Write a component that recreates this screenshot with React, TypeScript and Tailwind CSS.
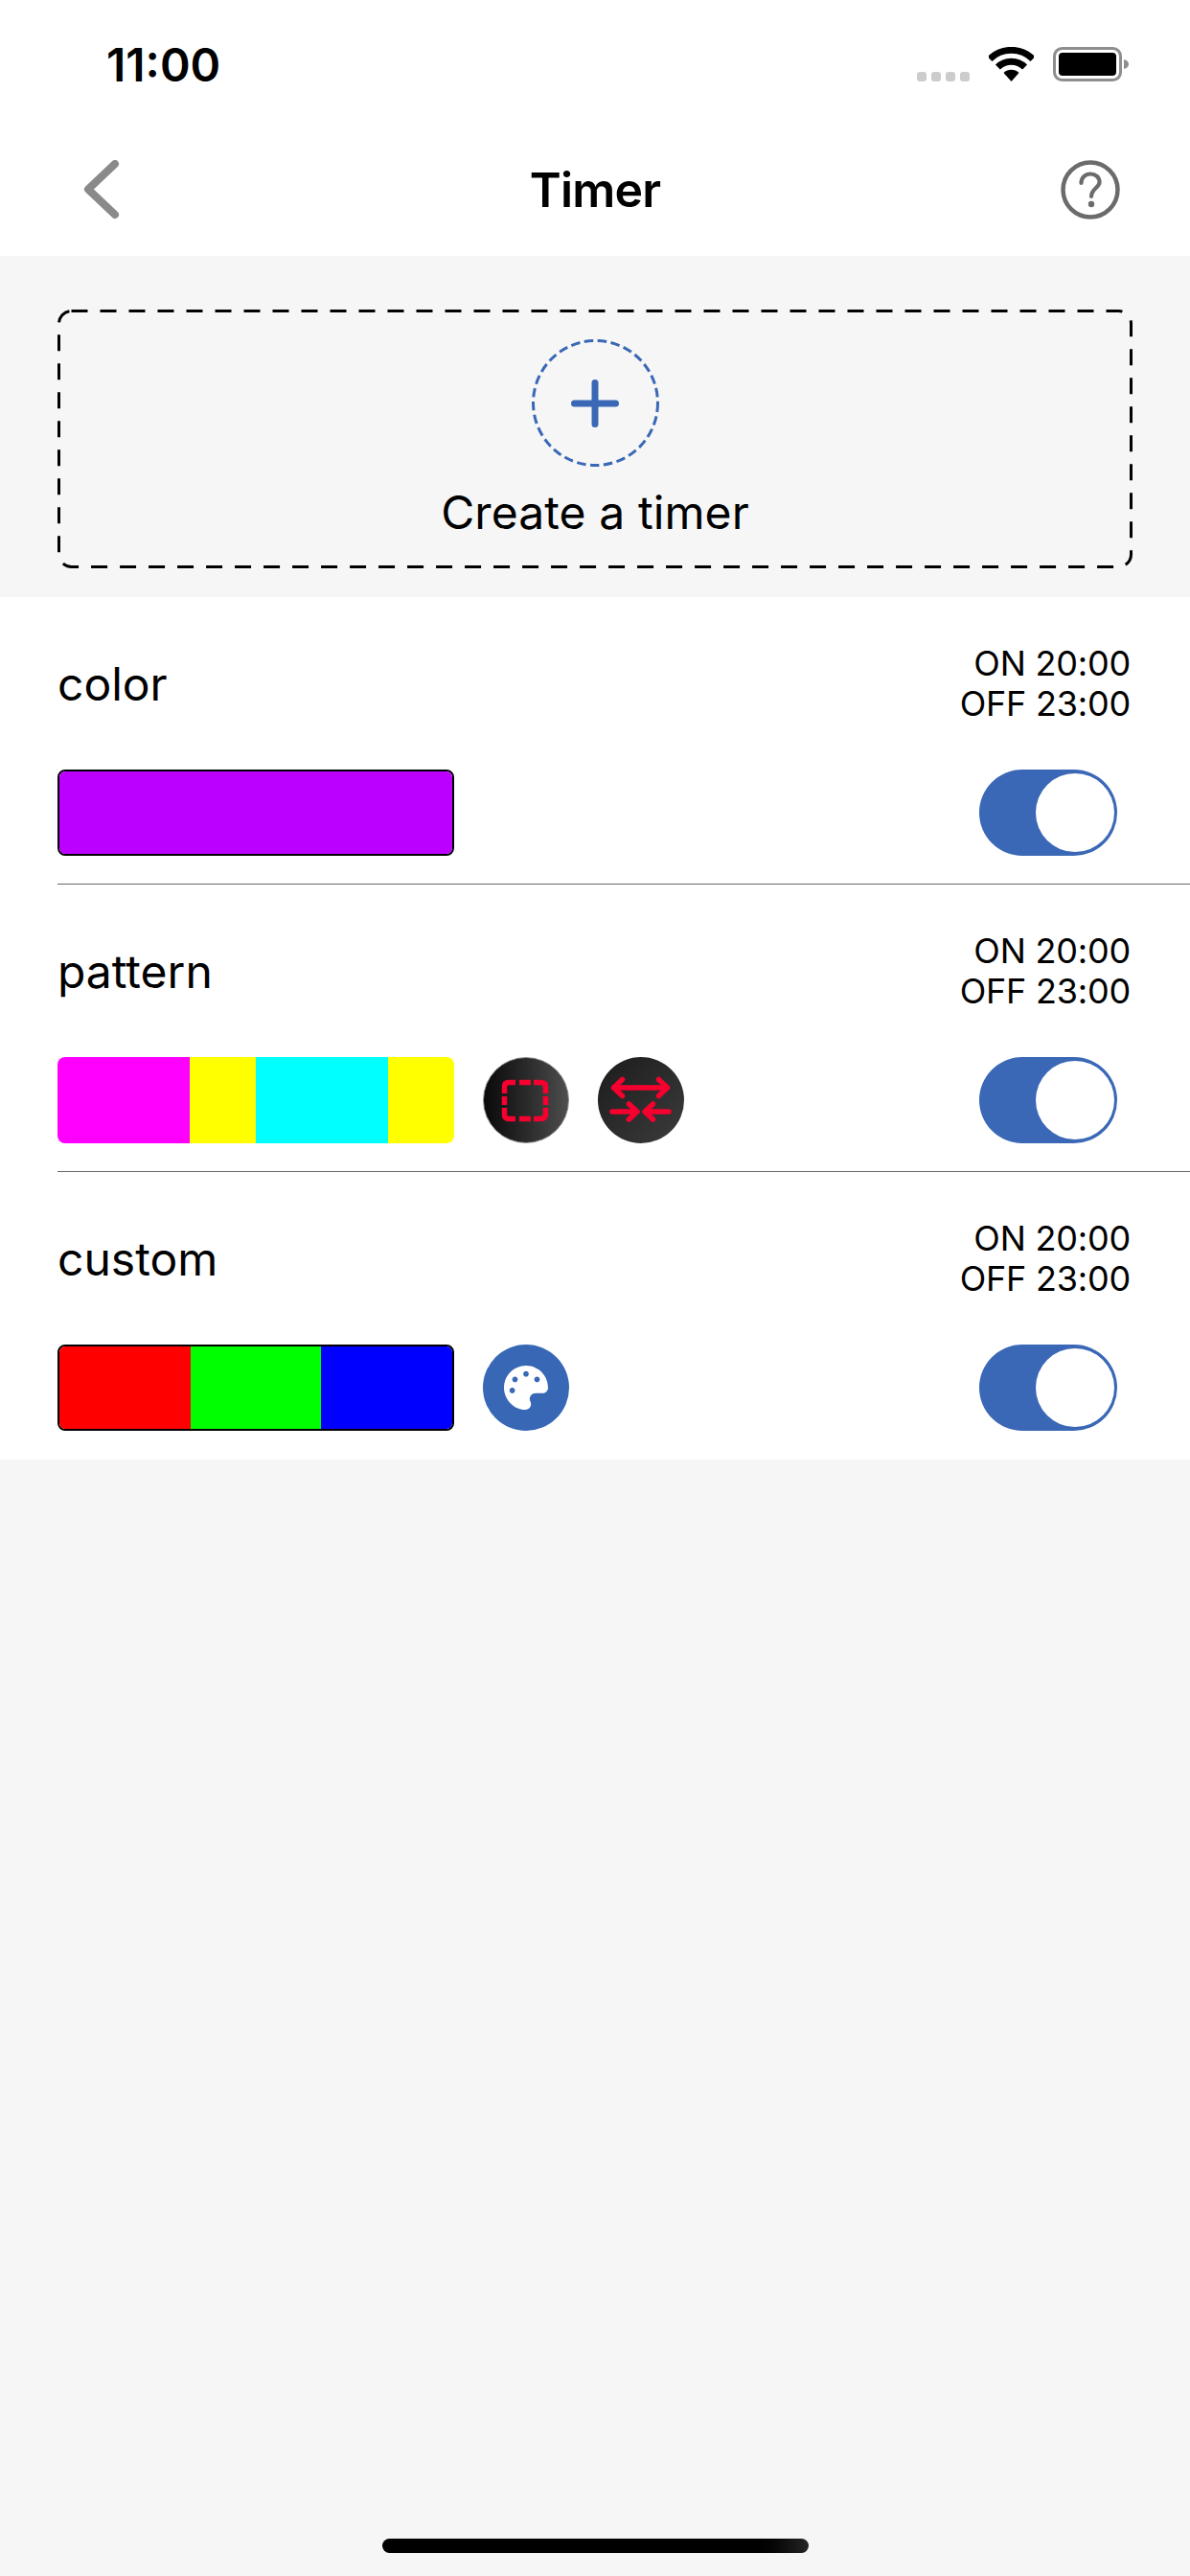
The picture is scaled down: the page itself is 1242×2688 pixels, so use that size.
import { FaPalette } from "react-icons/fa";

const BLUE = "#3a68b6";

function StatusBar() {
  return (
    <div className="flex h-[134px] items-start pl-[111px] pr-[64px] pt-[41px]">
      <span className="text-[48px] font-semibold leading-[54px] text-black">11:00</span>
      <div className="ml-auto flex items-start pt-[8px]">
        <div className="mr-[20px] mt-[26px] flex gap-[5px]">
          {[0, 1, 2, 3].map((i) => (
            <span key={i} className="h-[10px] w-[10px] rounded-[3px] bg-[#cccccc]" />
          ))}
        </div>
        <svg width="47" height="36" viewBox="0 0 47 36" className="mr-[20px]">
          <path d="M1 12.6 A32 32 0 0 1 46 12.6" fill="none" stroke="#000" strokeWidth="7" />
          <path d="M9.4 21 A20 20 0 0 1 37.6 21" fill="none" stroke="#000" strokeWidth="7" />
          <path d="M23.5 36 L15.5 27 A11.5 11.5 0 0 1 31.5 27 Z" fill="#000" />
        </svg>
        <svg width="79" height="36" viewBox="0 0 79 36">
          <rect x="1.5" y="1.5" width="69" height="33" rx="8" fill="none" stroke="#8e8e8e" strokeWidth="3" />
          <rect x="6" y="6" width="60" height="24" rx="4" fill="#000" />
          <path d="M74 13 C77 13.6 79 15.5 79 18 C79 20.5 77 22.4 74 23 Z" fill="#8e8e8e" />
        </svg>
      </div>
    </div>
  );
}

function NavBar() {
  return (
    <header className="flex h-[133px] items-start justify-between px-[73px] pt-[33px]">
      <svg width="62" height="62" viewBox="0 0 62 62">
        <path d="M47 4 L19 30.5 L47 57" fill="none" stroke="#8a8a8a" strokeWidth="8" strokeLinecap="round" strokeLinejoin="round" />
      </svg>
      <h1 className="mt-[1px] text-[50px] font-semibold leading-[60px] tracking-[-0.8px] text-black">Timer</h1>
      <svg width="62" height="62" viewBox="0 0 62 62">
        <circle cx="31" cy="31" r="28.5" fill="none" stroke="#6b6b6b" strokeWidth="4.5" />
        <path d="M21.5 24 C21.5 18 26 14.5 31 14.5 C36.5 14.5 40.5 18 40.5 23 C40.5 29 32 30 32 38" fill="none" stroke="#6b6b6b" strokeWidth="4.2" strokeLinecap="round" />
        <circle cx="32" cy="46" r="3.2" fill="#6b6b6b" />
      </svg>
    </header>
  );
}

function CreateTimer() {
  return (
    <section className="h-[356px] px-[60px] pt-[56px]">
      <div className="relative flex h-[270px] flex-col items-center pt-[31px]">
        <svg className="absolute inset-0 h-full w-full" viewBox="0 0 1122 270">
          <rect x="1.5" y="1.5" width="1119" height="267" rx="13" fill="none" stroke="#000" strokeWidth="3" strokeDasharray="17 13" />
        </svg>
        <div className="relative flex h-[133px] w-[133px] items-center justify-center">
          <svg className="absolute inset-0 h-full w-full" viewBox="0 0 133 133">
            <circle cx="66.5" cy="66.5" r="65" fill="none" stroke={BLUE} strokeWidth="3" strokeDasharray="9.5 4.5" />
          </svg>
          <svg width="50" height="50" viewBox="0 0 50 50">
            <path d="M25 3.5 V46.5 M3.5 25 H46.5" fill="none" stroke={BLUE} strokeWidth="7" strokeLinecap="round" />
          </svg>
        </div>
        <p className="mt-[19px] text-[48px] font-normal leading-[58px] tracking-[0.1px] text-black">Create a timer</p>
      </div>
    </section>
  );
}

function Toggle() {
  return (
    <div className="ml-auto mr-[76px] flex h-[90px] w-[144px] items-center justify-end rounded-full bg-[#3a68b6] pr-[3px]">
      <span className="h-[82px] w-[82px] rounded-full bg-white" />
    </div>
  );
}

function ColorBar({ segments, bordered }: { segments: { color: string; width: number }[]; bordered: boolean }) {
  return (
    <div className={`flex h-[90px] w-[414px] shrink-0 overflow-hidden rounded-[8px] ${bordered ? "border-2 border-black" : ""}`}>
      {segments.map((s, i) => (
        <span key={i} className="h-full" style={{ backgroundColor: s.color, flexGrow: s.width, flexBasis: 0 }} />
      ))}
    </div>
  );
}

function ExpandIcon() {
  return (
    <div className="ml-[30px] flex h-[90px] w-[90px] items-center justify-center rounded-full border border-[#8a8a8a] bg-linear-to-r from-[#0a0a0a] to-[#4e4e4e]">
      <svg width="90" height="90" viewBox="0 0 90 90" className="shrink-0">
        <g fill="none" stroke="#f5002f" strokeWidth="5.5">
          <path d="M34 26.5 H27 Q22.5 26.5 22.5 31 V38" />
          <path d="M53 26.5 H60 Q65.5 26.5 65.5 31 V38" />
          <path d="M34 64.5 H27 Q22.5 64.5 22.5 60 V53" />
          <path d="M53 64.5 H60 Q65.5 64.5 65.5 60 V53" />
          <path d="M38 26.5 H50" />
          <path d="M38 64.5 H50" />
          <path d="M22.5 41 V50" />
          <path d="M65.5 41 V50" />
        </g>
      </svg>
    </div>
  );
}

function SwapIcon() {
  return (
    <div className="ml-[30px] flex h-[90px] w-[90px] items-center justify-center rounded-full bg-linear-to-br from-[#1c1c1c] to-[#3c3c3c]">
      <svg width="90" height="90" viewBox="0 0 90 90" className="shrink-0">
        <g fill="none" stroke="#f5002f" strokeWidth="5.5" strokeLinecap="round" strokeLinejoin="round">
          <path d="M17 32 H72" />
          <path d="M25.5 23.5 L16.5 32 L25.5 40.5" />
          <path d="M63.5 23.5 L72.5 32 L63.5 40.5" />
          <path d="M15 57 H40" />
          <path d="M32.5 49 L41 57 L32.5 65" />
          <path d="M74 57 H50" />
          <path d="M57.5 49 L49 57 L57.5 65" />
        </g>
      </svg>
    </div>
  );
}

function PaletteButton() {
  return (
    <div className="ml-[30px] flex h-[90px] w-[90px] items-center justify-center rounded-full bg-[#3867b5] text-white">
      <FaPalette size={46} />
    </div>
  );
}

function TimerRow({
  label,
  segments,
  bordered,
  last,
  children,
}: {
  label: string;
  segments: { color: string; width: number }[];
  bordered: boolean;
  last?: boolean;
  children?: React.ReactNode;
}) {
  return (
    <div className={`h-[300px] pt-[48px] ${last ? "" : "border-b border-[#666666]"}`}>
      <div className="flex h-[84px] items-center justify-between pr-[62px]">
        <span className="pt-[2px] text-[48px] leading-[58px] text-black">{label}</span>
        <div className="text-right text-[36px] leading-[42px] tracking-[-0.2px] text-black">
          <p>ON 20:00</p>
          <p>OFF 23:00</p>
        </div>
      </div>
      <div className="mt-[48px] flex items-center">
        <ColorBar segments={segments} bordered={bordered} />
        {children}
        <Toggle />
      </div>
    </div>
  );
}

export default function App() {
  return (
    <div className="flex h-[2688px] w-[1242px] flex-col bg-[#f6f6f6] font-[Inter,sans-serif]">
      <div className="bg-white">
        <StatusBar />
        <NavBar />
      </div>
      <CreateTimer />
      <main className="bg-white pl-[60px]">
        <TimerRow label="color" bordered segments={[{ color: "#bb00ff", width: 1 }]} />
        <TimerRow
          label="pattern"
          bordered={false}
          segments={[
            { color: "#ff00ff", width: 2 },
            { color: "#ffff00", width: 1 },
            { color: "#00ffff", width: 2 },
            { color: "#ffff00", width: 1 },
          ]}
        >
          <ExpandIcon />
          <SwapIcon />
        </TimerRow>
        <TimerRow
          label="custom"
          bordered
          last
          segments={[
            { color: "#ff0000", width: 1 },
            { color: "#00ff00", width: 1 },
            { color: "#0000ff", width: 1 },
          ]}
        >
          <PaletteButton />
        </TimerRow>
      </main>
      <div className="mt-auto flex justify-center pb-[24px]">
        <span className="h-[15px] w-[445px] rounded-full bg-linear-to-r from-black from-[85%] to-[#262626]" />
      </div>
    </div>
  );
}
